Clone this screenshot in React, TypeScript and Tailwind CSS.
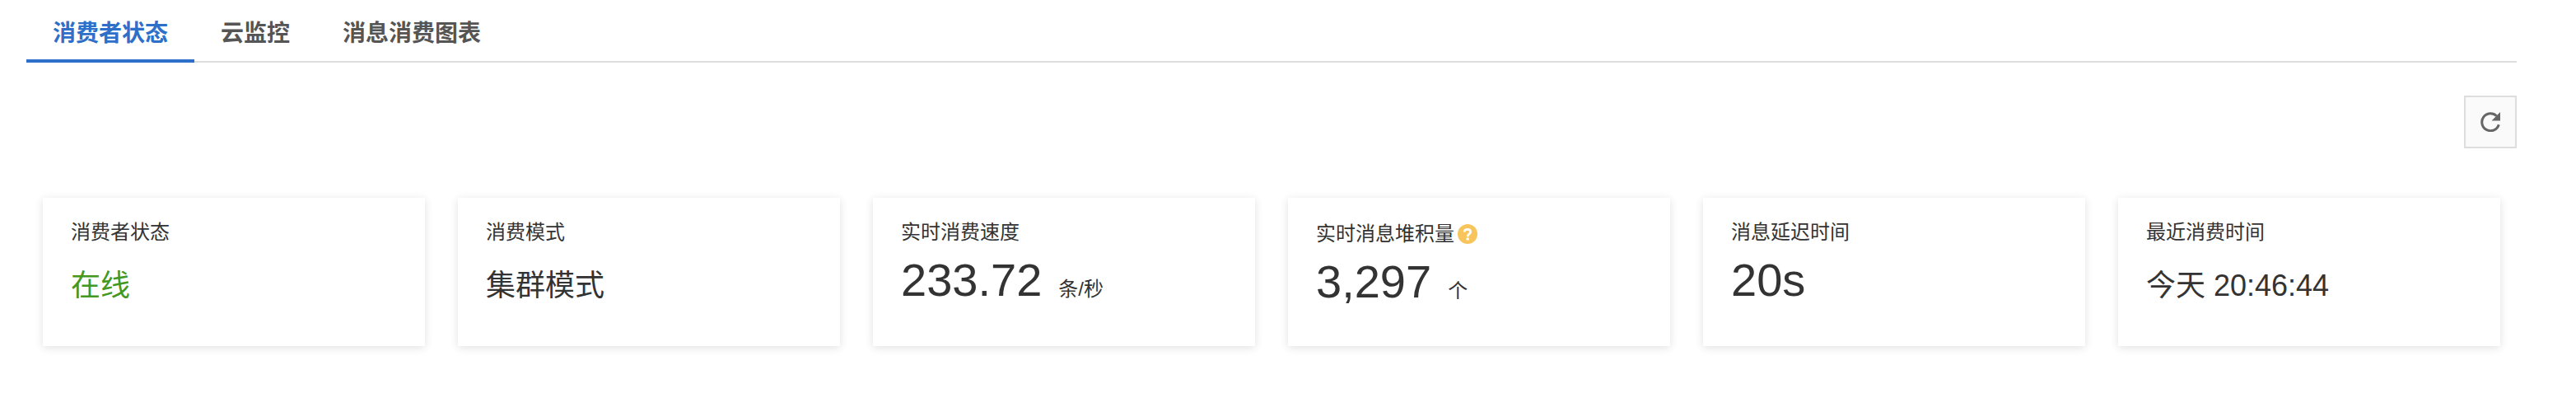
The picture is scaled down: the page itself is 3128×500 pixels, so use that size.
import React from "react";

type Stat = {
  label: string;
  value: string;
  unit?: string;
  help?: boolean;
  big?: boolean;
  color?: string;
};

const tabs = ["消费者状态", "云监控", "消息消费图表"];

const stats: Stat[] = [
  { label: "消费者状态", value: "在线", color: "text-[#43991f]" },
  { label: "消费模式", value: "集群模式" },
  { label: "实时消费速度", value: "233.72", unit: "条/秒", big: true },
  { label: "实时消息堆积量", value: "3,297", unit: "个", big: true, help: true },
  { label: "消息延迟时间", value: "20s", big: true },
  { label: "最近消费时间", value: "今天 20:46:44" },
];

function RefreshIcon() {
  return (
    <svg viewBox="0 0 24 24" className="size-6" aria-hidden="true">
      <path d="M22.3 15.2A10.5 10.5 0 1 1 19.6 4.7" fill="none" stroke="#666" strokeWidth="3" />
      <path d="M24 0v10.6H13.6z" fill="#666" />
    </svg>
  );
}

function HelpIcon() {
  return (
    <svg viewBox="0 0 24 24" className="size-6" aria-hidden="true">
      <circle cx="12" cy="12" r="12" fill="#f7c55c" />
      <path
        d="M8.2 9.6C8.2 7.4 9.8 6.4 12 6.4s3.7 1.1 3.7 3c0 2.6-3.5 2.4-3.5 5.8"
        fill="none"
        stroke="#fff"
        strokeWidth="2.8"
      />
      <rect x="10.6" y="16.6" width="3.2" height="3" rx="0.6" fill="#fff" />
    </svg>
  );
}

function StatCard({ label, value, unit, help, big, color = "text-[#333]" }: Stat) {
  return (
    <section
      className={`min-h-45 min-w-0 flex-1 bg-white px-[34px] shadow-[0_2px_10px_rgba(0,0,0,0.12)] ${help ? "pt-6" : "pt-[22px]"}`}
    >
      <h2 className="flex h-10 items-center gap-1 text-2xl leading-10 whitespace-nowrap text-[#333]">
        {label}
        {help && (
          <button type="button" aria-label="说明">
            <HelpIcon />
          </button>
        )}
      </h2>
      <p className={`text-[56px] leading-19 whitespace-nowrap ${color}`}>
        <span className={big ? "" : "text-4xl leading-19"}>{value}</span>
        {unit && <span className="ml-5 text-2xl leading-10">{unit}</span>}
      </p>
    </section>
  );
}

export default function App() {
  return (
    <main className="bg-white pr-18 pb-20 pl-8 font-['Liberation_Sans','Noto_Sans_CJK_SC',sans-serif]">
      <div role="tablist" className="flex h-[76px] border-b-2 border-[#ddd]">
        {tabs.map((tab, i) => (
          <button
            key={tab}
            type="button"
            role="tab"
            aria-selected={i === 0}
            className={`-mb-0.5 border-b-4 px-8 pt-2.5 text-[28px] leading-9 font-bold ${
              i === 0 ? "border-[#2d6fc9] text-[#2d6fc9]" : "border-transparent text-[#555]"
            }`}
          >
            {tab}
          </button>
        ))}
      </div>
      <div className="flex justify-end pt-10">
        <button
          type="button"
          aria-label="刷新"
          className="flex size-16 items-center justify-center border-2 border-[#ddd] bg-[#fafafa]"
        >
          <RefreshIcon />
        </button>
      </div>
      <div className="flex gap-10 px-5 pt-15">
        {stats.map((s) => (
          <StatCard key={s.label} {...s} />
        ))}
      </div>
    </main>
  );
}
